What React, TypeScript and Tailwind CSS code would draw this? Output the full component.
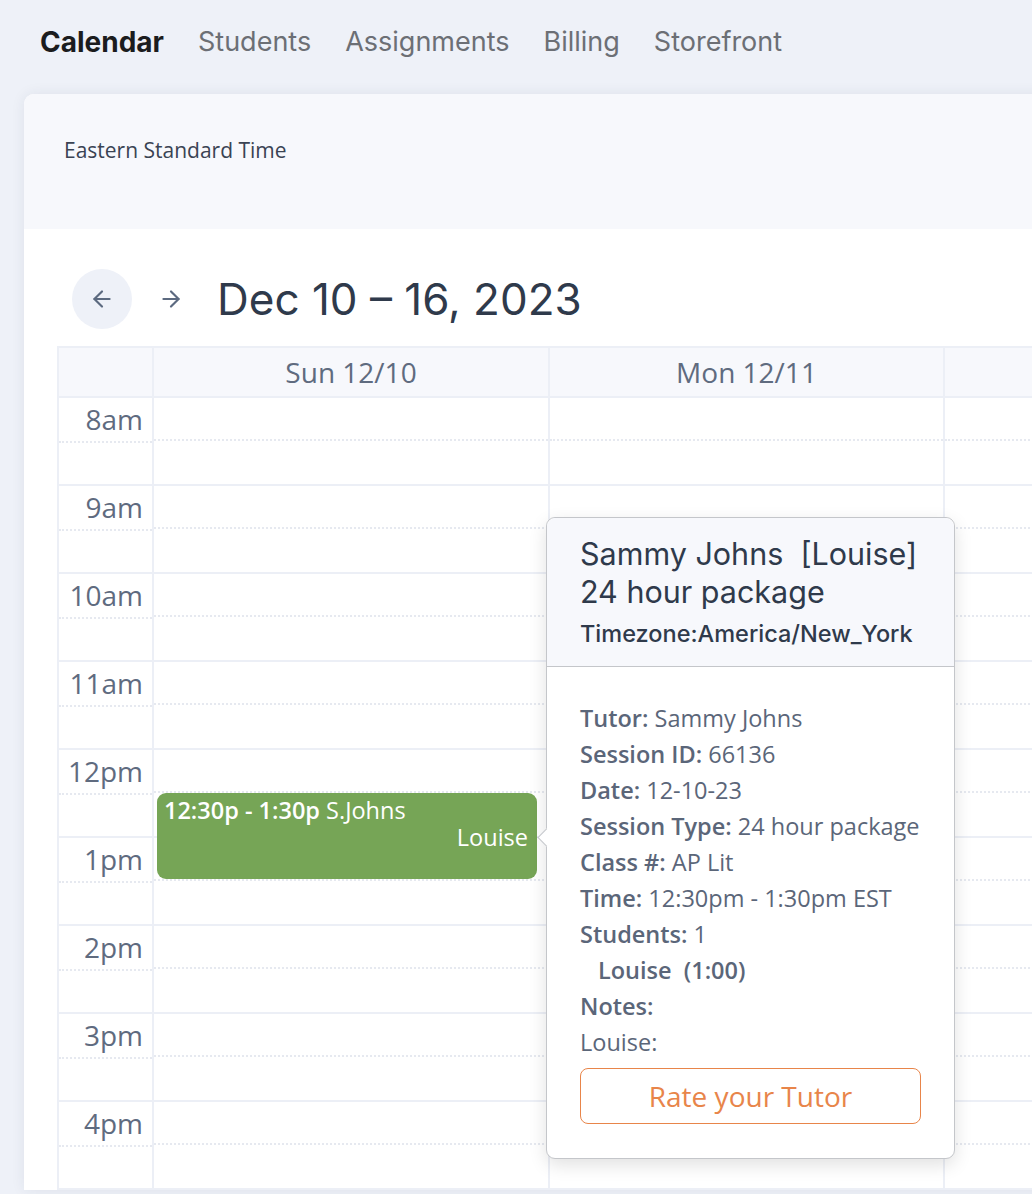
import React from 'react';
import { ArrowLeft, ArrowRight } from 'lucide-react';

const hours = ['8am', '9am', '10am', '11am', '12pm', '1pm', '2pm', '3pm', '4pm'];
// third column runs off the right edge, so its label is never seen
const days = ['Sun 12/10', 'Mon 12/11', ''];

const navItems = ['Calendar', 'Students', 'Assignments', 'Billing', 'Storefront'];

const details: { label: string; value: string }[] = [
    { label: 'Tutor:', value: 'Sammy Johns' },
    { label: 'Session ID:', value: '66136' },
    { label: 'Date:', value: '12-10-23' },
    { label: 'Session Type:', value: '24 hour package' },
    { label: 'Class #:', value: 'AP Lit' },
    { label: 'Time:', value: '12:30pm - 1:30pm EST' },
    { label: 'Students:', value: '1' },
];

const SessionPopover: React.FC = () => (
    <div className="absolute left-[487px] top-[169px] z-20 w-[409px] rounded-[9px] border border-[#c4c6ca] bg-white shadow-[0_6px_18px_rgba(0,0,0,0.12)]">
        {/* little pointer towards the event */}
        <div className="absolute left-[-7px] top-[313px] h-[13px] w-[13px] rotate-45 border-b border-l border-[#c4c6ca] bg-white" />
        <div className="rounded-t-[9px] border-b border-[#c4c6ca] bg-[#f7f8fc] px-[33px] pt-[17px] pb-[18px] font-['Inter',sans-serif] text-[#2f3a4b]">
            <div className="whitespace-pre text-[30.5px] leading-[38px]">Sammy Johns  [Louise]</div>
            <div className="text-[30.5px] leading-[38px]">24 hour package</div>
            <div className="mt-[9px] whitespace-nowrap text-[23.5px] font-medium leading-[28px]">Timezone:America/New_York</div>
        </div>
        <div className="px-[33px] pt-[33px] pb-[34px] font-['Open_Sans',sans-serif] text-[23.5px] leading-[36px] text-[#5b6679]">
            {details.map((d) => (
                <div key={d.label} className="whitespace-nowrap">
                    <span className="font-semibold">{d.label}</span> {d.value}
                </div>
            ))}
            <div className="whitespace-pre pl-[18px] font-semibold">Louise  (1:00)</div>
            <div className="font-semibold">Notes:</div>
            <div>Louise:</div>
            <button className="mt-[8px] h-[56px] w-full rounded-[8px] border-[1.5px] border-[#e8854a] text-[28px] text-[#e8854a]">
                Rate your Tutor
            </button>
        </div>
    </div>
);

const App: React.FC = () => {
    return (
        <div className="h-[1194px] w-[1032px] overflow-hidden bg-[#eef1f8]">
            <nav className="flex h-[94px] items-center gap-[34px] pb-[10px] pl-[40px] font-['Inter',sans-serif] text-[27px]">
                {navItems.map((item, i) => (
                    <span key={item} className={i === 0 ? 'text-[28px] font-bold text-[#1b1c1e]' : 'text-[#6c6f75]'}>
                        {item}
                    </span>
                ))}
            </nav>

            <div className="ml-[24px] w-[1200px] rounded-tl-[10px] bg-white shadow-[0_0_14px_rgba(40,50,80,0.08)]">
                <div className="h-[135px] rounded-tl-[10px] bg-[#f7f8fc] pl-[40px] pt-[42px] font-['Open_Sans',sans-serif] text-[21px] leading-[28px] text-[#3a4353]">
                    Eastern Standard Time
                </div>

                <div className="pl-[33px] pt-[40px]">
                    <div className="flex items-center pl-[15px]">
                        <button className="flex h-[60px] w-[60px] shrink-0 items-center justify-center rounded-full bg-[#eef1f8] text-[#5c6a80]">
                            <ArrowLeft size={26} strokeWidth={2} />
                        </button>
                        <button className="ml-[24px] flex h-[60px] w-[30px] shrink-0 items-center justify-center text-[#5c6a80]">
                            <ArrowRight size={26} strokeWidth={2} />
                        </button>
                        <h1 className="ml-[31px] font-['Inter',sans-serif] text-[44px] leading-[60px] text-[#2f3a4b]">
                            Dec 10 – 16, 2023
                        </h1>
                    </div>

                    <div className="relative mt-[17px] border-l-2 border-t-2 border-[#eceff6]">
                        <div className="grid grid-cols-[93px_396px_395px_395px] border-b-2 border-[#eceff6] bg-[#f7f8fc]">
                            <div className="h-[48px]" />
                            {days.map((d, i) => (
                                <div
                                    key={i}
                                    className="flex h-[48px] items-center justify-center whitespace-nowrap border-l-2 border-[#eceff6] font-['Open_Sans',sans-serif] text-[28px] font-medium text-[#5f6b7f]"
                                >
                                    {d}
                                </div>
                            ))}
                        </div>

                        {hours.map((h) => (
                            <div key={h} className="grid grid-cols-[93px_396px_395px_395px] border-b-2 border-[#eceff6]">
                                <div className="h-[86px] pr-[9px] pt-[3px] text-right font-['Open_Sans',sans-serif] text-[28px] leading-[36px] text-[#5f6b7f]">
                                    {h}
                                </div>
                                {days.map((d, i) => (
                                    <div key={i} className="flex h-[86px] flex-col border-l-2 border-[#eceff6]">
                                        <div className="h-[43px] border-b-2 border-dotted border-[#e6e9f0]" />
                                    </div>
                                ))}
                            </div>
                        ))}

                        {/* dotted half-hour lines also run through the time gutter */}
                        {hours.map((h, i) => (
                            <div
                                key={h + '-gutter'}
                                className="pointer-events-none absolute left-0 w-[93px] border-b-2 border-dotted border-[#e6e9f0]"
                                style={{ top: 50 + i * 88 + 43 }}
                            />
                        ))}

                        <div className="absolute left-[98px] top-[445px] z-10 h-[86px] w-[380px] rounded-[9px] bg-[#76a556] px-[7px] pt-[4px] font-['Open_Sans',sans-serif] text-[23.5px] leading-[27px] text-white">
                            <div className="whitespace-nowrap">
                                <span className="font-semibold">12:30p - 1:30p</span> S.Johns
                            </div>
                            <div className="pr-[2px] text-right">Louise</div>
                        </div>

                        <SessionPopover />
                    </div>
                </div>
            </div>
        </div>
    );
};

export default App;
